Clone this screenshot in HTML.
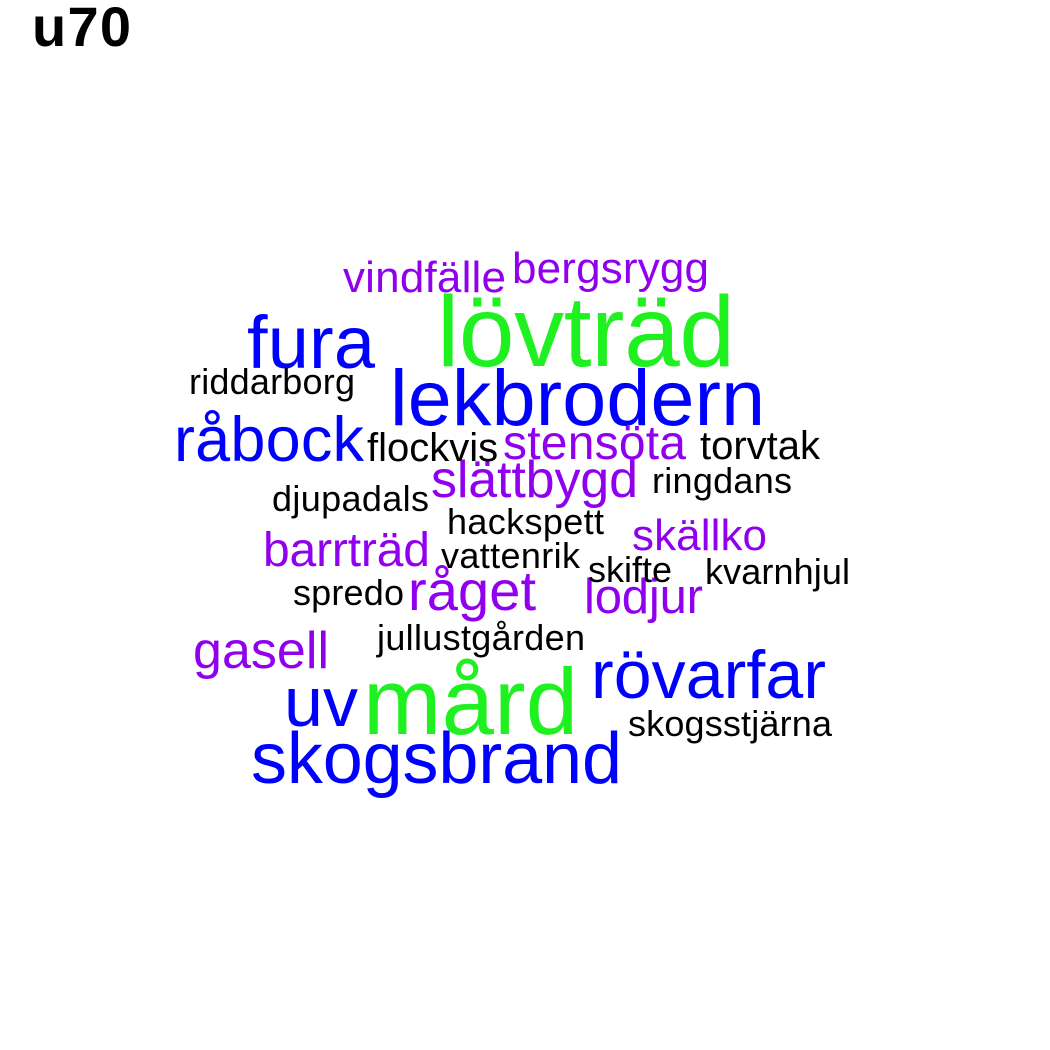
<!DOCTYPE html>
<html><head><meta charset="utf-8"><style>html,body{margin:0;padding:0;background:#fff;width:1050px;height:1050px;overflow:hidden}</style></head><body>
<svg width="1050" height="1050" xmlns="http://www.w3.org/2000/svg" font-family="Liberation Sans, Arial, sans-serif">
<text x="32" y="46" font-size="56" font-weight="bold" fill="#000" textLength="99">u70</text>
<g fill="#9000ee">
<text x="343" y="292" font-size="44" textLength="163">vindfälle</text>
<text x="512" y="283" font-size="44" textLength="197">bergsrygg</text>
<text x="503" y="459" font-size="48" textLength="183">stensöta</text>
<text x="431" y="497" font-size="52" textLength="207">slättbygd</text>
<text x="263" y="566" font-size="48" textLength="167">barrträd</text>
<text x="632" y="550" font-size="44" textLength="135">skällko</text>
<text x="408" y="610" font-size="56" textLength="128">råget</text>
<text x="584" y="613" font-size="49" textLength="119">lodjur</text>
<text x="193" y="668" font-size="52" textLength="136">gasell</text>
</g>
<g fill="#00f">
<text x="390" y="425" font-size="79" textLength="375">lekbrodern</text>
<text x="247" y="368" font-size="74" textLength="128">fura</text>
<text x="251" y="783" font-size="72" textLength="371">skogsbrand</text>
<text x="591" y="698" font-size="68" textLength="235">rövarfar</text>
<text x="284" y="726" font-size="70" textLength="74">uv</text>
<text x="174" y="461" font-size="63" textLength="190">råbock</text>
</g>
<g fill="#1ff01f">
<text x="437" y="366" font-size="100" textLength="298">lövträd</text>
<text x="363" y="734" font-size="94" textLength="215">mård</text>
</g>
<g fill="#000" font-size="36">
<text x="189" y="394" textLength="166">riddarborg</text>
<text x="367" y="461" font-size="40">flockvis</text>
<text x="700" y="459" font-size="40">torvtak</text>
<text x="652" y="493" textLength="140">ringdans</text>
<text x="272" y="511" textLength="157">djupadals</text>
<text x="447" y="534" textLength="157">hackspett</text>
<text x="441" y="568" textLength="139">vattenrik</text>
<text x="588" y="582" textLength="84">skifte</text>
<text x="705" y="584" textLength="145">kvarnhjul</text>
<text x="293" y="605" textLength="111">spredo</text>
<text x="377" y="650" textLength="208">jullustgården</text>
<text x="628" y="736" textLength="204">skogsstjärna</text>
</g>
</svg>
</body></html>
